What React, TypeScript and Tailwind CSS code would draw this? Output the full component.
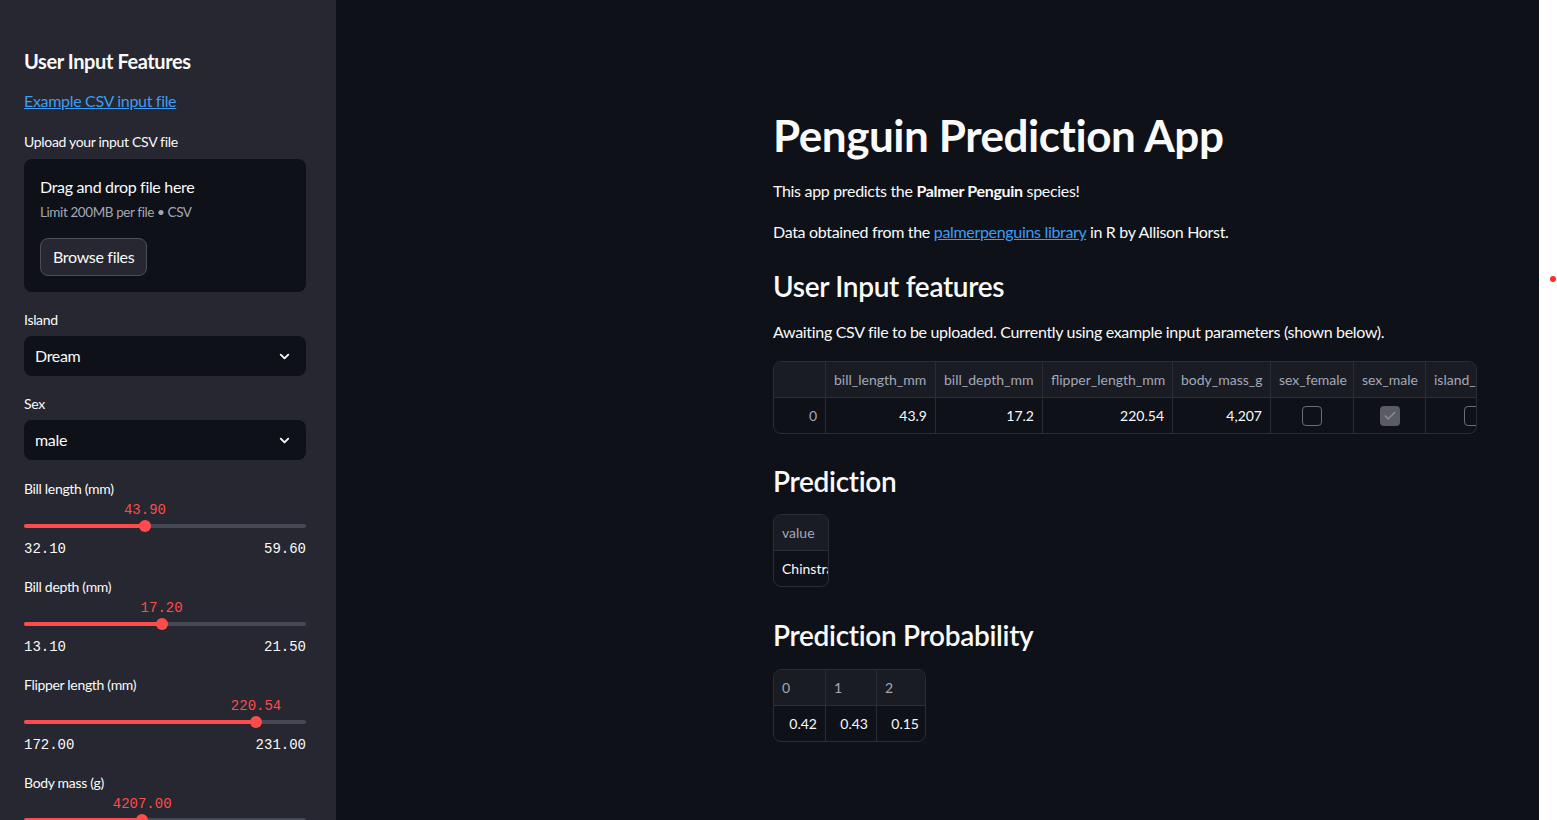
import { ChevronDown, Check } from "lucide-react";

const sans = "font-['Source_Sans_Pro','Lato',sans-serif]";
const mono = "font-['Liberation_Mono',monospace]";

type SliderProps = { label: string; value: string; min?: string; max?: string; pct: number };

function Slider({ label, value, min, max, pct }: SliderProps) {
  return (
    <div className="mb-[18px]">
      <div className="text-[14px] leading-[20px] pb-[1px] text-[#fafafa]">{label}</div>
      <div className="relative h-[20px]">
        <span
          className={`absolute top-0 -translate-x-1/2 text-[14px] leading-[20px] tracking-normal text-[#ff4b4b] ${mono}`}
          style={{ left: `${pct}%` }}
        >
          {value}
        </span>
      </div>
      <div className="relative h-[12px] flex items-center">
        <div className="w-full h-[4px] rounded-full bg-[#464853]" />
        <div className="absolute left-0 h-[4px] rounded-full bg-[#ff4b4b]" style={{ width: `${pct}%` }} />
        <div
          className="absolute w-[12px] h-[12px] rounded-full bg-[#ff4b4b] -translate-x-1/2"
          style={{ left: `${pct}%` }}
        />
      </div>
      {min && max && (
        <div className={`flex justify-between mt-[7px] text-[14px] leading-[20px] tracking-normal text-[#fafafa] ${mono}`}>
          <span>{min}</span>
          <span>{max}</span>
        </div>
      )}
    </div>
  );
}

function Select({ label, value }: { label: string; value: string }) {
  return (
    <div>
      <div className="text-[14px] leading-[20px] text-[#fafafa] mb-[6px]">{label}</div>
      <div className="h-[40px] rounded-lg bg-[#0e1117] flex items-center justify-between pl-[11px] pr-[14px]">
        <span className="text-[16px] text-[#fafafa]">{value}</span>
        <ChevronDown className="w-[15px] h-[15px] text-[#fafafa]" strokeWidth={3} />
      </div>
    </div>
  );
}

function Checkbox({ checked }: { checked: boolean }) {
  return checked ? (
    <div className="w-[20px] h-[20px] rounded-[4px] bg-[#5b5c63] flex items-center justify-center">
      <Check className="w-[14px] h-[14px] text-[#8d8e94]" strokeWidth={2.5} />
    </div>
  ) : (
    <div className="w-[20px] h-[20px] rounded-[4px] border border-[#6b6d75]" />
  );
}

type Col = { name: string; w: string; v?: string; idx?: boolean; box?: boolean; last?: boolean };

const cols: Col[] = [
  { name: "", w: "w-[51px]", v: "0", idx: true },
  { name: "bill_length_mm", w: "w-[110px]", v: "43.9" },
  { name: "bill_depth_mm", w: "w-[107px]", v: "17.2" },
  { name: "flipper_length_mm", w: "w-[130px]", v: "220.54" },
  { name: "body_mass_g", w: "w-[98px]", v: "4,207" },
  { name: "sex_female", w: "w-[83px]", box: false },
  { name: "sex_male", w: "w-[72px]", box: true },
  { name: "island_Biscoe", w: "w-[90px]", box: false, last: true },
];

export default function App() {
  return (
    <div className={`flex w-[1557px] h-[820px] overflow-hidden bg-white tracking-[-0.02em] ${sans}`}>
      {/* Sidebar */}
      <aside className="w-[336px] shrink-0 bg-[#262730] pl-6 pr-[30px] pt-[48px]">
        <h2 className="text-[20px] leading-[26px] font-bold text-[#fafafa] tracking-[-0.02em]">User Input Features</h2>
        <div className="mt-[15px]">
          <a href="#" className="text-[16px] leading-[24px] text-[#3d9df3] underline">
            Example CSV input file
          </a>
        </div>
        <div className="mt-[19px] text-[14px] leading-[20px] text-[#fafafa]">Upload your input CSV file</div>
        <div className="mt-[7px] h-[133px] rounded-lg bg-[#0e1117] px-4 pt-[17px]">
          <div className="text-[16px] leading-[22px] text-[#fafafa]">Drag and drop file here</div>
          <div className="mt-[4px] text-[13.5px] leading-[20px] text-[#a3a8b8] tracking-[-0.03em]">
            Limit 200MB per file • CSV
          </div>
          <button className="mt-[16px] h-[38px] px-[12px] rounded-lg border border-[#4d4e57] bg-[#262730] text-[16px] text-[#fafafa]">
            Browse files
          </button>
        </div>
        <div className="mt-[18px]">
          <Select label="Island" value="Dream" />
        </div>
        <div className="mt-[18px]">
          <Select label="Sex" value="male" />
        </div>
        <div className="mt-[19px]">
          <Slider label="Bill length (mm)" value="43.90" min="32.10" max="59.60" pct={42.9} />
          <Slider label="Bill depth (mm)" value="17.20" min="13.10" max="21.50" pct={48.8} />
          <Slider label="Flipper length (mm)" value="220.54" min="172.00" max="231.00" pct={82.3} />
          <Slider label="Body mass (g)" value="4207.00" pct={41.9} />
        </div>
      </aside>

      {/* Main */}
      <main className="w-[1203px] shrink-0 bg-[#0e1117] text-[#fafafa] pl-[437px] pt-[105px]">
        <div className="w-[704px]">
          <h1 className="text-[44px] leading-[60px] font-bold tracking-[-0.01em]">Penguin Prediction App</h1>
          <p className="mt-[14px] text-[16px] leading-[24px]">
            This app predicts the <strong className="font-bold">Palmer Penguin</strong> species!
          </p>
          <p className="mt-[17px] text-[16px] leading-[24px]">
            Data obtained from the{" "}
            <a href="#" className="text-[#3d9df3] underline">palmerpenguins library</a> in R by Allison Horst.
          </p>
          <h3 className="mt-[22px] text-[28px] leading-[40px] font-semibold">User Input features</h3>
          <p className="mt-[14px] text-[16px] leading-[24px]">
            Awaiting CSV file to be uploaded. Currently using example input parameters (shown below).
          </p>

          {/* Features table */}
          <div className="mt-[17px] w-[704px] h-[73px] overflow-hidden rounded-lg border border-[#2b2d35] tracking-normal">
            <div className="flex w-max">
              {cols.map((c, i) => (
                <div key={i} className={`${c.w} shrink-0 ${i > 0 ? "border-l border-[#2b2d35]" : ""}`}>
                  <div className="h-[36px] bg-[#1a1c24] border-b border-[#2b2d35] px-2 flex items-center text-[14px] text-[#a3a8b8] whitespace-nowrap overflow-hidden">
                    {c.name}
                  </div>
                  <div className="h-[35px] px-2 flex items-center justify-end text-[14px] text-[#fafafa]">
                    {c.box !== undefined ? (
                      <div className={`w-full flex ${c.last ? "justify-start pl-[30px]" : "justify-center"}`}>
                        <Checkbox checked={c.box} />
                      </div>
                    ) : (
                      <span className={c.idx ? "text-[#a3a8b8]" : ""}>{c.v}</span>
                    )}
                  </div>
                </div>
              ))}
            </div>
          </div>

          <h3 className="mt-[27px] text-[28px] leading-[40px] font-semibold">Prediction</h3>
          <div className="mt-[13px] w-[56px] h-[73px] overflow-hidden rounded-lg border border-[#2b2d35] tracking-normal">
            <div className="h-[36px] bg-[#1a1c24] border-b border-[#2b2d35] px-2 flex items-center text-[14px] text-[#a3a8b8]">
              value
            </div>
            <div className="h-[35px] px-2 flex items-center text-[14px] whitespace-nowrap">Chinstrap</div>
          </div>

          <h3 className="mt-[28px] text-[28px] leading-[40px] font-semibold">Prediction Probability</h3>
          <div className="mt-[14px] w-[153px] h-[73px] overflow-hidden rounded-lg border border-[#2b2d35] flex tracking-normal">
            {["0.42", "0.43", "0.15"].map((v, i) => (
              <div key={i} className={`w-[51px] shrink-0 ${i > 0 ? "border-l border-[#2b2d35]" : ""}`}>
                <div className="h-[36px] bg-[#1a1c24] border-b border-[#2b2d35] px-2 flex items-center text-[14px] text-[#a3a8b8]">
                  {i}
                </div>
                <div className="h-[35px] px-2 flex items-center justify-end text-[14px]">{v}</div>
              </div>
            ))}
          </div>
        </div>
      </main>

      {/* Right strip */}
      <div className="flex-1 bg-white flex flex-col pt-[276px] items-end pr-[1px]">
        <div className="w-[6px] h-[6px] rounded-full bg-[#ff2b2b]" />
      </div>
    </div>
  );
}
